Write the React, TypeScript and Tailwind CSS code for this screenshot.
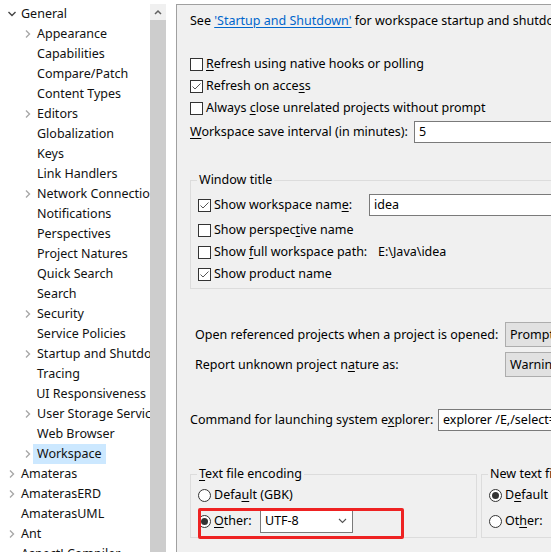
import React from "react";

const tree: [string, number, string][] = [
  ["General", 0, "open"],
  ["Appearance", 1, "closed"],
  ["Capabilities", 1, ""],
  ["Compare/Patch", 1, ""],
  ["Content Types", 1, ""],
  ["Editors", 1, "closed"],
  ["Globalization", 1, ""],
  ["Keys", 1, ""],
  ["Link Handlers", 1, ""],
  ["Network Connections", 1, "closed"],
  ["Notifications", 1, ""],
  ["Perspectives", 1, ""],
  ["Project Natures", 1, ""],
  ["Quick Search", 1, ""],
  ["Search", 1, ""],
  ["Security", 1, "closed"],
  ["Service Policies", 1, ""],
  ["Startup and Shutdown", 1, "closed"],
  ["Tracing", 1, ""],
  ["UI Responsiveness", 1, ""],
  ["User Storage Service", 1, "closed"],
  ["Web Browser", 1, ""],
  ["Workspace", 1, "closed"],
  ["Amateras", 0, "closed"],
  ["AmaterasERD", 0, "closed"],
  ["AmaterasUML", 0, ""],
  ["Ant", 0, "closed"],
  ["AspectJ Compiler", 0, ""],
];

function Chevron({ state }: { state: string }) {
  if (state === "open")
    return (
      <svg width="10" height="8" viewBox="0 0 10 8" className="-ml-[2px]">
        <polyline points="1.5,2 5,5.5 8.5,2" fill="none" stroke="#444" strokeWidth="1.4" />
      </svg>
    );
  if (state === "closed")
    return (
      <svg width="8" height="10" viewBox="0 0 8 10">
        <polyline points="1,1.5 4.5,5 1,8.5" fill="none" stroke="#a8a8a8" strokeWidth="1.4" />
      </svg>
    );
  return null;
}

function U({ children }: { children: React.ReactNode }) {
  return <span className="underline underline-offset-[2px]">{children}</span>;
}

function Check({ on }: { on?: boolean }) {
  return (
    <span className="w-[13px] h-[13px] border border-[#333] bg-white flex items-center justify-center shrink-0">
      {on && (
        <svg width="11" height="11" viewBox="0 0 11 11">
          <polyline points="1.5,5.5 4,8 9.5,2.5" fill="none" stroke="#555" strokeWidth="1" />
        </svg>
      )}
    </span>
  );
}

function Radio({ on }: { on?: boolean }) {
  return (
    <span className="w-[13px] h-[13px] rounded-full border border-[#333] bg-white flex items-center justify-center shrink-0">
      {on && <span className="w-[7px] h-[7px] rounded-full bg-[#333]" />}
    </span>
  );
}

function CheckRow({ on, children }: { on?: boolean; children: React.ReactNode }) {
  return (
    <div className="h-[22px] flex items-center gap-[3px] whitespace-nowrap">
      <Check on={on} />
      <span>{children}</span>
    </div>
  );
}

export default function App() {
  return (
    <div className="w-[551px] h-[552px] overflow-hidden flex bg-white text-[12.5px] leading-[16px] text-black font-['Noto_Sans',sans-serif]">
      {/* tree */}
      <div className="w-[150px] shrink-0 overflow-hidden pt-[4px] text-[#111]">
        {tree.map(([label, level, state]) => (
          <div
            key={label}
            className={`h-[20px] flex items-center whitespace-nowrap ${level ? "pl-[25px]" : "pl-[9px]"}`}
          >
            <span className="w-[8px] flex items-center">
              <Chevron state={state} />
            </span>
            <span className={`px-[4px] h-[20px] flex items-center ${label === "Workspace" ? "bg-[#cce8ff]" : ""}`}>
              {label}
            </span>
          </div>
        ))}
      </div>

      {/* scrollbar */}
      <div className="w-[16px] shrink-0 flex flex-col pt-[4px]">
        <div className="h-[16px] bg-[#f0f0f0] flex items-center justify-center">
          <svg width="8" height="6" viewBox="0 0 8 6">
            <polyline points="1,5 4,2 7,5" fill="none" stroke="#606060" strokeWidth="1.5" />
          </svg>
        </div>
        <div className="flex-1 bg-[#cdcdcd]" />
      </div>
      <div className="w-[10px] shrink-0" />

      {/* preference page */}
      <div className="flex-1 min-w-0 pt-[4px] flex flex-col">
        <div className="flex-1 bg-[#f0f0f0] border-l border-t border-[#a0a0a0] overflow-hidden pl-[13px] flex flex-col">
          <div className="mt-[8px] h-[16px] whitespace-nowrap">
            See <span className="text-[#0066cc] underline underline-offset-[2px]">'Startup and Shutdown'</span> for
            workspace startup and shutdown options.
          </div>

          <div className="mt-[24px] flex flex-col">
            <CheckRow>
              <U>R</U>efresh using native hooks or polling
            </CheckRow>
            <CheckRow on>
              Refresh on acce<U>s</U>s
            </CheckRow>
            <CheckRow>
              Always <U>c</U>lose unrelated projects without prompt
            </CheckRow>
          </div>

          <div className="mt-[2px] h-[22px] flex items-center whitespace-nowrap">
            <span className="w-[224px] shrink-0">
              <U>W</U>orkspace save interval (in minutes):
            </span>
            <div className="h-[22px] w-[200px] shrink-0 bg-white border border-[#7a7a7a] pl-[4px] flex items-center">5</div>
          </div>

          <fieldset className="mt-[29px] w-[400px] shrink-0 border border-[#dcdcdc] pl-[7px] pb-[3px]">
            <legend className="-ml-[1px] px-[2px] leading-[16px]">Window title</legend>
            <div className="mt-[6px] h-[22px] flex items-center whitespace-nowrap">
              <span className="w-[171px] shrink-0 flex items-center gap-[3px]">
                <Check on />
                <span>
                  Show workspace nam<U>e</U>:
                </span>
              </span>
              <div className="h-[22px] w-[200px] shrink-0 bg-white border border-[#7a7a7a] pl-[4px] flex items-center">idea</div>
            </div>
            <div className="mt-[3px]">
              <CheckRow>
                Show perspec<U>t</U>ive name
              </CheckRow>
            </div>
            <div className="h-[22px] flex items-center whitespace-nowrap">
              <span className="w-[180px] shrink-0 flex items-center gap-[3px]">
                <Check />
                <span>
                  Show <U>f</U>ull workspace path:
                </span>
              </span>
              <span>E:\Java\idea</span>
            </div>
            <CheckRow on>Show product name</CheckRow>
          </fieldset>

          <div className="mt-[33px] pl-[5px] grid grid-cols-[310px_200px] gap-y-[5px] whitespace-nowrap">
            <div className="h-[25px] flex items-center">Open referenced projects when a project is opened:</div>
            <div className="h-[25px] bg-[#e1e1e1] border border-[#adadad] px-[4px] flex items-center">Prompt</div>
            <div className="h-[25px] flex items-center">
              <span>
                Report unknown project n<U>a</U>ture as:
              </span>
            </div>
            <div className="h-[25px] bg-[#e1e1e1] border border-[#adadad] px-[4px] flex items-center">Warning</div>
          </div>

          <div className="mt-[32px] h-[22px] flex items-center whitespace-nowrap">
            <span className="w-[248px] shrink-0">
              Command for launching system e<U>x</U>plorer:
            </span>
            <div className="h-[22px] w-[200px] shrink-0 bg-white border border-[#7a7a7a] pl-[4px] flex items-center">
              explorer /E,/select=
            </div>
          </div>

          <div className="mt-[35px] flex gap-[4px] items-start">
            <fieldset className="w-[287px] shrink-0 border border-[#dcdcdc] pl-[7px] pb-[4px]">
              <legend className="-ml-[1px] px-[2px] leading-[16px]">
                <U>T</U>ext file encoding
              </legend>
              <div className="mt-[2px] h-[22px] flex items-center gap-[3px] whitespace-nowrap">
                <Radio />
                <span>
                  Defa<U>u</U>lt (GBK)
                </span>
              </div>
              <div className="relative mt-[3px] h-[24px] flex items-center whitespace-nowrap">
                <span className="w-[62px] shrink-0 flex items-center gap-[3px]">
                  <Radio on />
                  <span>
                    <U>O</U>ther:
                  </span>
                </span>
                <div className="h-[24px] w-[93px] shrink-0 bg-white border border-[#7a7a7a] pl-[4px] pr-[5px] flex items-center justify-between">
                  <span>UTF-8</span>
                  <svg width="9" height="6" viewBox="0 0 9 6">
                    <polyline points="1,1 4.5,4.5 8,1" fill="none" stroke="#555" strokeWidth="1.1" />
                  </svg>
                </div>
                <div className="absolute left-0 -top-[1px] w-[206px] h-[31px] border-[3px] border-[#ee2222] rounded-[2px]" />
              </div>
            </fieldset>

            <fieldset className="w-[200px] shrink-0 border border-[#dcdcdc] pl-[7px] pb-[4px]">
              <legend className="-ml-[1px] px-[2px] leading-[16px] whitespace-nowrap">New text file line delimiter</legend>
              <div className="mt-[2px] h-[22px] flex items-center gap-[3px] whitespace-nowrap">
                <Radio on />
                <span>
                  D<U>e</U>fault (Windows)
                </span>
              </div>
              <div className="mt-[3px] h-[24px] flex items-center gap-[3px] whitespace-nowrap">
                <Radio />
                <span>
                  Ot<U>h</U>er:
                </span>
              </div>
            </fieldset>
          </div>
        </div>
      </div>
    </div>
  );
}
